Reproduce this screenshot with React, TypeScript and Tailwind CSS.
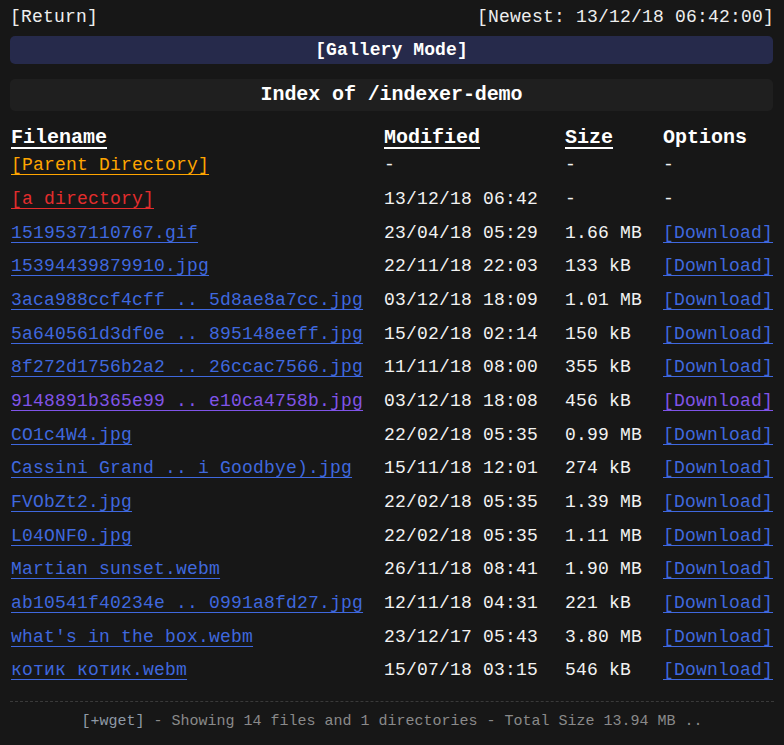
import React from "react";

interface Entry {
  name: string;
  modified: string;
  size: string;
  visited?: boolean;
}

const files: Entry[] = [
  { name: "1519537110767.gif", modified: "23/04/18 05:29", size: "1.66 MB" },
  { name: "15394439879910.jpg", modified: "22/11/18 22:03", size: "133 kB" },
  { name: "3aca988ccf4cff .. 5d8ae8a7cc.jpg", modified: "03/12/18 18:09", size: "1.01 MB" },
  { name: "5a640561d3df0e .. 895148eeff.jpg", modified: "15/02/18 02:14", size: "150 kB" },
  { name: "8f272d1756b2a2 .. 26ccac7566.jpg", modified: "11/11/18 08:00", size: "355 kB" },
  { name: "9148891b365e99 .. e10ca4758b.jpg", modified: "03/12/18 18:08", size: "456 kB", visited: true },
  { name: "CO1c4W4.jpg", modified: "22/02/18 05:35", size: "0.99 MB" },
  { name: "Cassini Grand .. i Goodbye).jpg", modified: "15/11/18 12:01", size: "274 kB" },
  { name: "FVObZt2.jpg", modified: "22/02/18 05:35", size: "1.39 MB" },
  { name: "L04ONF0.jpg", modified: "22/02/18 05:35", size: "1.11 MB" },
  { name: "Martian sunset.webm", modified: "26/11/18 08:41", size: "1.90 MB" },
  { name: "ab10541f40234e .. 0991a8fd27.jpg", modified: "12/11/18 04:31", size: "221 kB" },
  { name: "what's in the box.webm", modified: "23/12/17 05:43", size: "3.80 MB" },
  { name: "котик котик.webm", modified: "15/07/18 03:15", size: "546 kB" },
];

const row = "grid grid-cols-[373px_181px_98px_1fr] items-center h-[33.67px] pl-px";

const App = () => {
  return (
    <div
      className="min-h-screen bg-[#171717] text-[#f2f2f2] px-[10px] pt-[6px] text-[18px] tracking-[0.2px]"
      style={{ fontFamily: '"Liberation Mono", "DejaVu Sans Mono", "Noto Sans CJK SC", monospace' }}
    >
      <div className="flex justify-between h-[22px] leading-[22px]">
        <a href="#" className="text-[#eeeeee]">[Return]</a>
        <span className="text-[#eeeeee]">[Newest: 13/12/18 06:42:00]</span>
      </div>

      <div className="mt-[8px] mr-px h-[28px] rounded-[5px] bg-[#262a4b] flex items-center justify-center font-bold text-white tracking-[0.1px]">
        [Gallery Mode]
      </div>

      <div className="mt-[15px] mr-px h-[32px] rounded-[5px] bg-[#1f1f1f] flex items-center justify-center font-bold text-[20px] tracking-[-0.1px] text-white">
        Index of /indexer-demo
      </div>

      <div className="mt-[12px]">
        <div className="grid grid-cols-[373px_181px_98px_1fr] items-center h-[26px] pl-px font-bold text-[20px] tracking-normal text-white">
          <span><span className="underline decoration-2 underline-offset-[4px]">Filename</span></span>
          <span><span className="underline decoration-2 underline-offset-[4px]">Modified</span></span>
          <span><span className="underline decoration-2 underline-offset-[4px]">Size</span></span>
          <span>Options</span>
        </div>

        <div className={row}>
          <span>
            <a href="#" className="text-[#ffa500] underline decoration-1 underline-offset-[4px]">[Parent Directory]</a>
          </span>
          <span>-</span>
          <span>-</span>
          <span>-</span>
        </div>

        <div className={row}>
          <span>
            <a href="#" className="text-[#e32d2d] underline decoration-1 underline-offset-[4px]">[a directory]</a>
          </span>
          <span>13/12/18 06:42</span>
          <span>-</span>
          <span>-</span>
        </div>

        {files.map((f) => {
          const color = f.visited ? "text-[#8054e8]" : "text-[#3f68de]";
          return (
            <div key={f.name} className={row}>
              <span className="whitespace-nowrap">
                <a href="#" className={`${color} underline decoration-1 underline-offset-[4px]`}>{f.name}</a>
              </span>
              <span>{f.modified}</span>
              <span>{f.size}</span>
              <span>
                <a href="#" className={`${color} underline decoration-1 underline-offset-[4px]`}>[Download]</a>
              </span>
            </div>
          );
        })}
      </div>

      <div className="mt-[13px] border-t border-dashed border-[#3a3a3a]"></div>
      <div className="h-[40px] pt-[2px] flex items-center justify-center text-[15px] tracking-normal text-[#8a8a8a]">
        <a href="#" className="text-[#8f9aa6]">[+wget]</a>
        <span className="whitespace-pre"> - Showing 14 files and 1 directories - Total Size 13.94 MB ..</span>
      </div>
    </div>
  );
};

export default App;
